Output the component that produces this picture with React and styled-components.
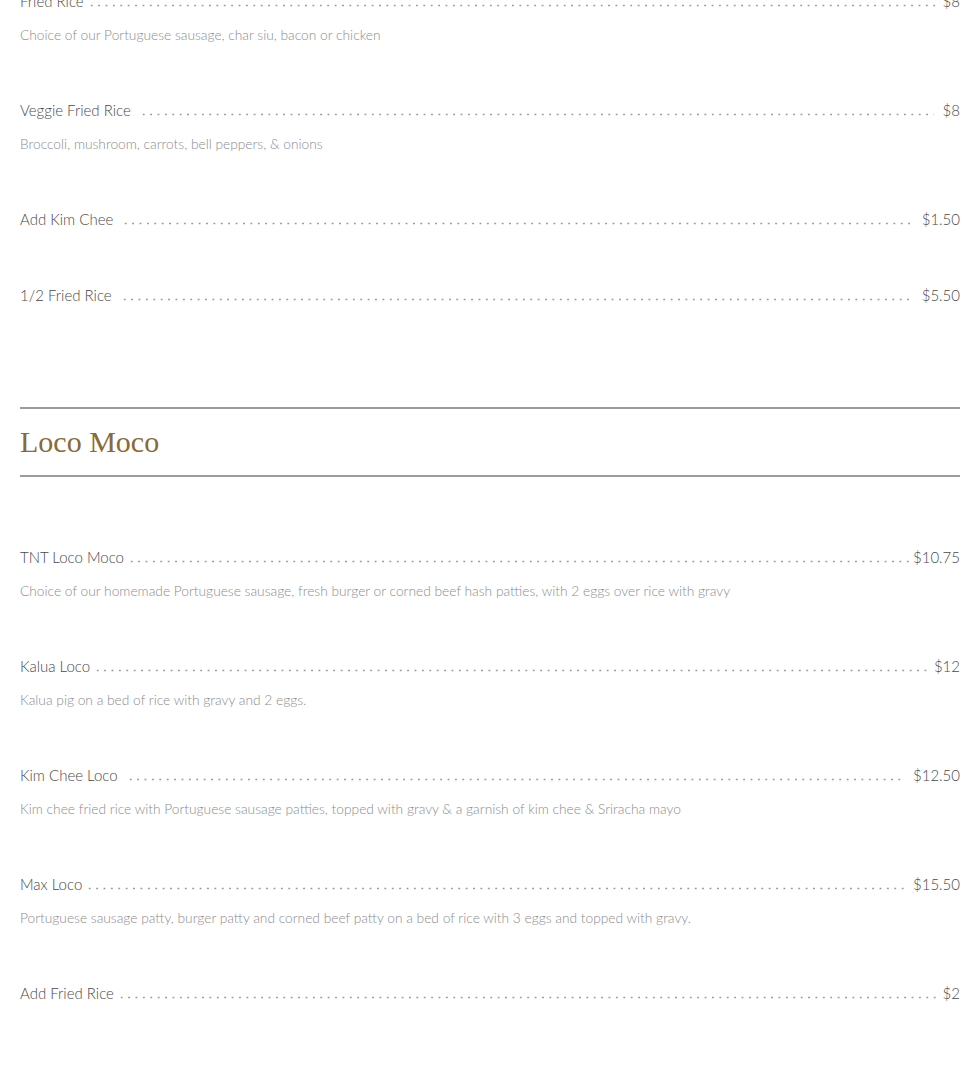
import React from 'react';
import styled, { createGlobalStyle } from 'styled-components';

const GlobalStyle = createGlobalStyle`
  body {
    margin: 0;
    background: #fff;
  }
`;

const Page = styled.div`
  font-family: 'Lato', 'Liberation Sans', sans-serif;
  font-weight: 300;
  padding: 0 5px 40px 20px;
  margin-top: -11px;
`;

const Section = styled.section`
  & + & {
    padding-top: 48px;
  }
`;

const SectionHeader = styled.div`
  border-top: 2px solid #9b9b9b;
  border-bottom: 2px solid #9b9b9b;
  height: 66px;
  display: flex;
  align-items: center;
  margin-bottom: 68px;
`;

const SectionTitle = styled.h2`
  margin: 0;
  font-family: 'Liberation Serif', 'Times New Roman', serif;
  font-weight: 400;
  font-size: 30px;
  line-height: 1;
  color: #8a6a36;
`;

const Item = styled.div`
  margin-bottom: 52px;
`;

const NameRow = styled.div`
  display: flex;
  height: 24px;
  line-height: 24px;
  font-size: 15px;
  color: #4a4a4a;
`;

const Name = styled.span`
  white-space: nowrap;
`;

const Leader = styled.span`
  flex: 1;
  margin: 0 ${p => (p.$tight ? '4px' : '9px')};
  background-image: radial-gradient(circle, #9a9a9a 0.8px, transparent 1.2px);
  background-size: 7.4px 3px;
  background-repeat: repeat-x;
  background-position: 0 15px;
`;

const Price = styled.span`
  white-space: nowrap;
`;

const Desc = styled.p`
  margin: 11px 0 0;
  font-size: 13.75px;
  line-height: 22px;
  color: #8c8c8c;
`;

const sections = [
  {
    title: null,
    items: [
      { name: 'Fried Rice', price: '$8', desc: 'Choice of our Portuguese sausage, char siu, bacon or chicken', tight: true },
      { name: 'Veggie Fried Rice', price: '$8', desc: 'Broccoli, mushroom, carrots, bell peppers, & onions' },
      { name: 'Add Kim Chee', price: '$1.50' },
      { name: '1/2 Fried Rice', price: '$5.50' },
    ],
  },
  {
    title: 'Loco Moco',
    items: [
      { name: 'TNT Loco Moco', price: '$10.75', tight: true, desc: 'Choice of our homemade Portuguese sausage, fresh burger or corned beef hash patties, with 2 eggs over rice with gravy' },
      { name: 'Kalua Loco', price: '$12', tight: true, desc: 'Kalua pig on a bed of rice with gravy and 2 eggs.' },
      { name: 'Kim Chee Loco', price: '$12.50', desc: 'Kim chee fried rice with Portuguese sausage patties, topped with gravy & a garnish of kim chee & Sriracha mayo' },
      { name: 'Max Loco', price: '$15.50', tight: true, desc: 'Portuguese sausage patty, burger patty and corned beef patty on a bed of rice with 3 eggs and topped with gravy.' },
      { name: 'Add Fried Rice', price: '$2', tight: true },
    ],
  },
];

const App = () => (
  <>
    <GlobalStyle />
    <Page>
      {sections.map((section, si) => (
        <Section key={si}>
          {section.title && (
            <SectionHeader>
              <SectionTitle>{section.title}</SectionTitle>
            </SectionHeader>
          )}
          {section.items.map(item => (
            <Item key={item.name}>
              <NameRow>
                <Name>{item.name}</Name>
                <Leader $tight={item.tight} />
                <Price>{item.price}</Price>
              </NameRow>
              {item.desc && <Desc>{item.desc}</Desc>}
            </Item>
          ))}
        </Section>
      ))}
    </Page>
  </>
);

export default App;
